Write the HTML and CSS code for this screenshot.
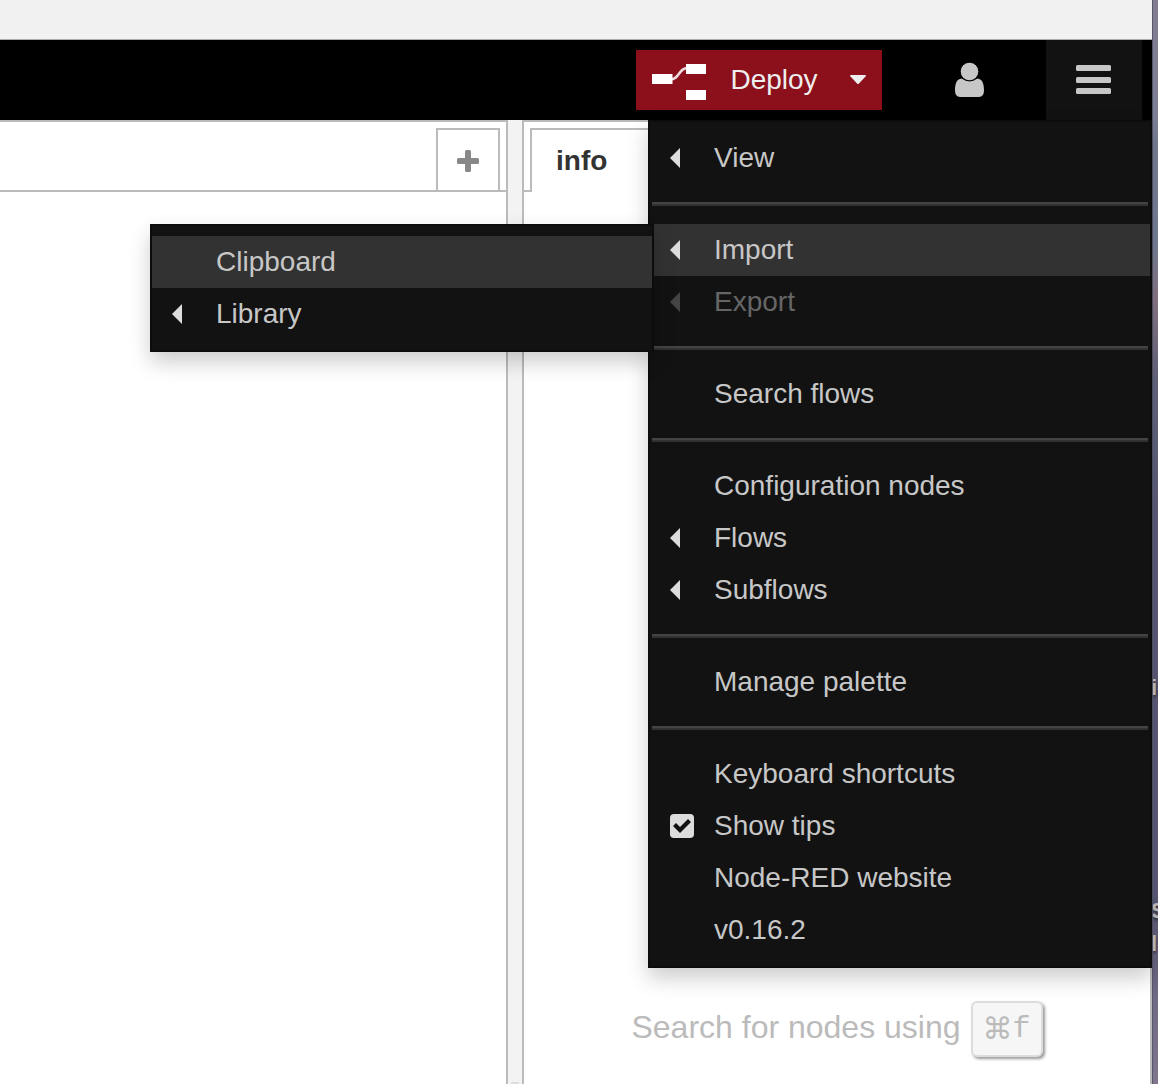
FILE: index.html
```html
<!DOCTYPE html>
<html lang="en">
<head>
<meta charset="utf-8">
<title>Node-RED</title>
<link rel="stylesheet" href="styles.css">
</head>
<body>
<div class="window">
  <div class="toolbar"></div>
  <header class="header">
    <div class="deploy">
      <button class="deploy-main" type="button">
        <svg width="54" height="40" viewBox="0 -4 54 40" aria-hidden="true">
          <path d="M18 15.500C28 15.500 26 4 36 4" fill="none" stroke="#fff" stroke-width="2.500" opacity=".85"/>
          <path d="M0 10h20.500v10H0zM34 0h20v10H34zM34 26h20v10H34z" fill="#fff"/>
        </svg>
        <span>Deploy</span>
      </button>
      <button class="deploy-options" type="button" aria-label="Deploy options">
        <svg width="16" height="10" viewBox="0 0 16 10" aria-hidden="true"><path d="M0 1Q0 0 1 0H15Q16 0 16 1L9 8.500Q8 9.500 7 8.500Z" fill="#eee"/></svg>
      </button>
    </div>
    <button class="header-button" type="button" aria-label="User">
      <svg width="30" height="36" viewBox="0 0 30 36" aria-hidden="true">
        <path d="M6.500 16.500C1.500 17 0 22 0 28.500Q0 35 5 35H24Q29 35 29 28.500C29 22 27.500 17 22.500 16.500Q14.500 22 6.500 16.500Z" fill="#c7c7c7"/>
        <circle cx="14.500" cy="9.500" r="9.300" fill="#c7c7c7" stroke="#000"/>
      </svg>
    </button>
    <button class="header-button header-button-open" type="button" aria-label="Menu" aria-expanded="true">
      <svg width="36" height="30" viewBox="0 0 36 30" aria-hidden="true">
        <g fill="#c7c7c7"><rect width="35" height="6" rx="1.500"/><rect y="12" width="35" height="6" rx="1.500"/><rect y="23" width="35" height="6" rx="1.500"/></g>
      </svg>
    </button>
    <ul class="menu main-menu">
      <li><a href="#"><span class="slot"><i class="arrow"></i></span>View</a></li>
      <li class="divider"></li>
      <li class="has-submenu">
        <a class="active" href="#"><span class="slot"><i class="arrow"></i></span>Import</a>
        <ul class="menu submenu">
          <li><a class="active" href="#"><span class="slot"></span>Clipboard</a></li>
          <li><a href="#"><span class="slot"><i class="arrow"></i></span>Library</a></li>
        </ul>
      </li>
      <li><a class="disabled" href="#" aria-disabled="true"><span class="slot"><i class="arrow"></i></span>Export</a></li>
      <li class="divider"></li>
      <li><a href="#"><span class="slot"></span>Search flows</a></li>
      <li class="divider"></li>
      <li><a href="#"><span class="slot"></span>Configuration nodes</a></li>
      <li><a href="#"><span class="slot"><i class="arrow"></i></span>Flows</a></li>
      <li><a href="#"><span class="slot"><i class="arrow"></i></span>Subflows</a></li>
      <li class="divider"></li>
      <li><a href="#"><span class="slot"></span>Manage palette</a></li>
      <li class="divider"></li>
      <li><a href="#"><span class="slot"></span>Keyboard shortcuts</a></li>
      <li><label for="tips"><span class="slot"><input id="tips" type="checkbox" checked></span>Show tips</label></li>
      <li><a href="#"><span class="slot"></span>Node-RED website</a></li>
      <li><a href="#"><span class="slot"></span>v0.16.2</a></li>
    </ul>
  </header>
  <div class="editor">
    <main class="workspace">
      <div class="tabs workspace-tabs">
        <button class="add-tab" type="button" aria-label="Add flow">
          <svg width="22" height="22" viewBox="0 0 22 22" aria-hidden="true"><path d="M9.500 0h3q1.500 0 1.500 1.500V8h6.500q1.500 0 1.500 1.500v3q0 1.500-1.500 1.500H14v6.500q0 1.500-1.500 1.500h-3Q8 22 8 20.500V14H1.500Q0 14 0 12.500v-3Q0 8 1.500 8H8V1.500Q8 0 9.500 0z" fill="#888"/></svg>
        </button>
      </div>
    </main>
    <div class="separator"><span class="grip"></span></div>
    <aside class="sidebar">
      <div class="tabs sidebar-tabs"><a class="tab" href="#">info</a></div>
      <p class="tip">Search for nodes using <kbd><span class="command">⌘</span>f</kbd></p>
    </aside>
  </div>
</div>
<div class="desktop">
  <span class="label label-a">ic</span>
  <span class="label label-b">S</span>
  <span class="label label-c">l</span>
</div>
</body>
</html>
```
FILE: styles.css
```css
* { box-sizing: border-box; }

body {
  display: flex;
  min-height: 100vh;
  margin: 0;
  font: 28px/52px "Liberation Sans", Arial, sans-serif;
  background: #fff;
}

button {
  display: flex;
  align-items: center;
  justify-content: center;
  padding: 0;
  border: 0;
  background: none;
  color: inherit;
  font: inherit;
}

a { color: inherit; text-decoration: none; }

.window {
  display: flex;
  flex: 1;
  flex-direction: column;
  min-width: 0;
}

.toolbar {
  height: 40px;
  border-bottom: 1px solid #aaa;
  background: #f1f1f1;
}

/* Header */
.header {
  position: relative;
  z-index: 2;
  display: flex;
  align-items: center;
  justify-content: flex-end;
  height: 80px;
  padding-right: 10px;
  background: #000;
}

.deploy {
  display: flex;
  height: 60px;
  margin-right: 40px;
  background: #8c101c;
  color: #eee;
}

.deploy-main { gap: 24px; width: 198px; }
.deploy-options { width: 48px; }
.header-button { width: 96px; height: 100%; }
.header-button-open { margin-left: 28px; background: #121212; }

/* Menus */
.menu {
  position: absolute;
  width: 504px;
  margin: 0;
  padding: 10px 0;
  border: 2px solid #0c0c0c;
  background: #121212;
  box-shadow: 0 10px 20px rgba(0, 0, 0, 0.2);
  color: #c7c7c7;
  list-style: none;
}

.main-menu { top: 100%; right: 0; }
.has-submenu { position: relative; }
.submenu { top: 0; right: 100%; margin-right: -4px; }

.menu a,
.menu label {
  display: flex;
  align-items: center;
  padding-left: 20px;
}

.menu .active { background: #323232; }
.menu .disabled { color: #666; }

.slot {
  display: flex;
  align-items: center;
  width: 44px;
}

.arrow {
  border: 10px solid transparent;
  border-right-color: #ddd;
  border-left-width: 0;
}

.disabled .arrow { border-right-color: #444; }

.divider {
  height: 4px;
  margin: 18px 2px;
  border-top: 2px solid #444;
  background: #323232;
}

.menu input {
  width: 24px;
  height: 24px;
  margin: 0;
  border-radius: 4px;
  appearance: none;
  background: #ddd;
}

.menu input:checked::before {
  display: block;
  height: 24px;
  background: #121212;
  clip-path: polygon(3px 12px, 6px 9px, 10px 13px, 18px 5px, 21px 8px, 10px 19px);
  content: "";
}

/* Editor */
.editor { display: flex; flex: 1; }

.workspace {
  flex: 1;
  min-width: 0;
  border: solid #bbb;
  border-width: 2px 2px 0 0;
}

.tabs {
  display: flex;
  height: 70px;
  padding-top: 6px;
}

.workspace-tabs {
  justify-content: flex-end;
  padding-right: 6px;
  border-bottom: 2px solid #bbb;
}

.add-tab {
  width: 64px;
  padding-top: 2px;
  border: 2px solid #bbb;
  border-bottom: 0;
}

.separator {
  display: flex;
  align-items: flex-end;
  justify-content: center;
  width: 14px;
  background: #f3f3f3;
}

.grip { width: 8px; height: 2px; background: #ddd; }

.sidebar {
  display: flex;
  flex-direction: column;
  justify-content: space-between;
  width: 630px;
  border: 2px solid #bbb;
  border-bottom: 0;
}

.sidebar-tabs::before {
  width: 6px;
  border-bottom: 2px solid #bbb;
  content: "";
}

.tab {
  flex: 1;
  padding-left: 24px;
  border: solid #bbb;
  border-width: 2px 0 0 2px;
  color: #333;
  font-weight: bold;
  line-height: 62px;
}

.tip {
  display: flex;
  align-items: flex-start;
  justify-content: center;
  gap: 10px;
  margin: 0 0 27px;
  color: #bbb;
  font-size: 32px;
}

.tip kbd {
  display: flex;
  justify-content: center;
  width: 72px;
  border: 2px solid #ddd;
  border-radius: 6px;
  background: #f6f6f6;
  box-shadow: 2px 2px 3px #999;
  font: 30px/52px "Liberation Mono", monospace;
}

.command { font-family: "DejaVu Sans", sans-serif; }

/* Desktop behind the window */
.desktop {
  position: relative;
  width: 6px;
  overflow: hidden;
  border-left: 1px solid #55586a;
  background: linear-gradient(#827c90 0, #77839a 240px, #8b7888 300px, #666880 380px, #5c5c7b 520px, #5c5c7b 900px, #80768c 100%);
}

.label {
  position: absolute;
  left: -2px;
  color: #c4c4c4;
  font-size: 22px;
  font-weight: bold;
  line-height: 24px;
  text-shadow: 0 2px 3px #333;
}

.label-a { top: 676px; }
.label-b { top: 899px; }
.label-c { top: 932px; }
```
